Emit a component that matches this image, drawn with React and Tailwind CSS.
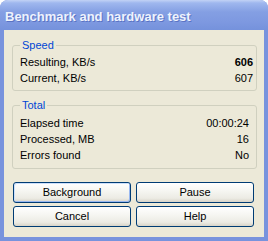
export default function App() {
  const font = { fontFamily: '"Liberation Sans", Arial, sans-serif' };

  return (
    <div className="w-[268px] h-[241px] bg-white" style={font}>
      <div className="w-full h-full flex flex-col rounded-t-[8px] overflow-hidden bg-[#7893dd]">
        {/* title bar */}
        <div className="h-[30px] shrink-0 flex items-center pl-[5px] bg-[linear-gradient(180deg,#c2d2f5_0%,#9fb7ee_10%,#849fe3_40%,#7d98e0_75%,#7592dc_100%)]">
          <span className="text-[13px] font-bold text-[#eef3fd] leading-none mt-[3px] [text-shadow:1px_1px_0_#5a73c4]">
            Benchmark and hardware test
          </span>
        </div>

        {/* body */}
        <div className="flex-1 mx-[4px] mb-[4px] bg-[#ece9d8] flex flex-col text-[11px] text-black pt-[15px] pb-[10px]">
          <div className="relative ml-[8px] mr-[7px] border border-[#d0d0bf] rounded-[3px] pt-[8px] pb-[4px] pl-[7px] pr-[3px]">
            <span className="absolute left-[7px] top-[-8px] px-[2px] bg-[#ece9d8] text-[#0046d5] leading-[14px]">Speed</span>
            <div className="flex justify-between h-[16px] items-center">
              <span>Resulting, KB/s</span>
              <span className="font-bold">606</span>
            </div>
            <div className="flex justify-between h-[16px] items-center">
              <span>Current, KB/s</span>
              <span>607</span>
            </div>
          </div>

          <div className="relative mt-[14px] ml-[8px] mr-[7px] border border-[#d0d0bf] rounded-[3px] pt-[9px] pb-[5px] pl-[7px] pr-[7px]">
            <span className="absolute left-[7px] top-[-8px] px-[2px] bg-[#ece9d8] text-[#0046d5] leading-[14px]">Total</span>
            <div className="flex justify-between h-[16px] items-center">
              <span>Elapsed time</span>
              <span>00:00:24</span>
            </div>
            <div className="flex justify-between h-[16px] items-center">
              <span>Processed, MB</span>
              <span>16</span>
            </div>
            <div className="flex justify-between h-[16px] items-center">
              <span>Errors found</span>
              <span>No</span>
            </div>
          </div>

          <div className="mt-[13px] ml-[9px] mr-[10px] grid grid-cols-2 gap-x-[5px] gap-y-[3px]">
            <XpButton focused>Background</XpButton>
            <XpButton>Pause</XpButton>
            <XpButton>Cancel</XpButton>
            <XpButton>Help</XpButton>
          </div>
        </div>
      </div>
    </div>
  );
}

function XpButton({ children, focused }) {
  return (
    <button
      className={
        "h-[21px] rounded-[3px] border border-[#003c74] text-[11px] text-black flex items-center justify-center bg-[linear-gradient(180deg,#ffffff_0%,#f6f6f2_40%,#ecebe4_80%,#d8d4c8_100%)] " +
        (focused ? "shadow-[inset_-1px_-1px_0_#99b8f0,inset_1px_1px_0_#cde0fb]" : "")
      }
    >
      {children}
    </button>
  );
}
